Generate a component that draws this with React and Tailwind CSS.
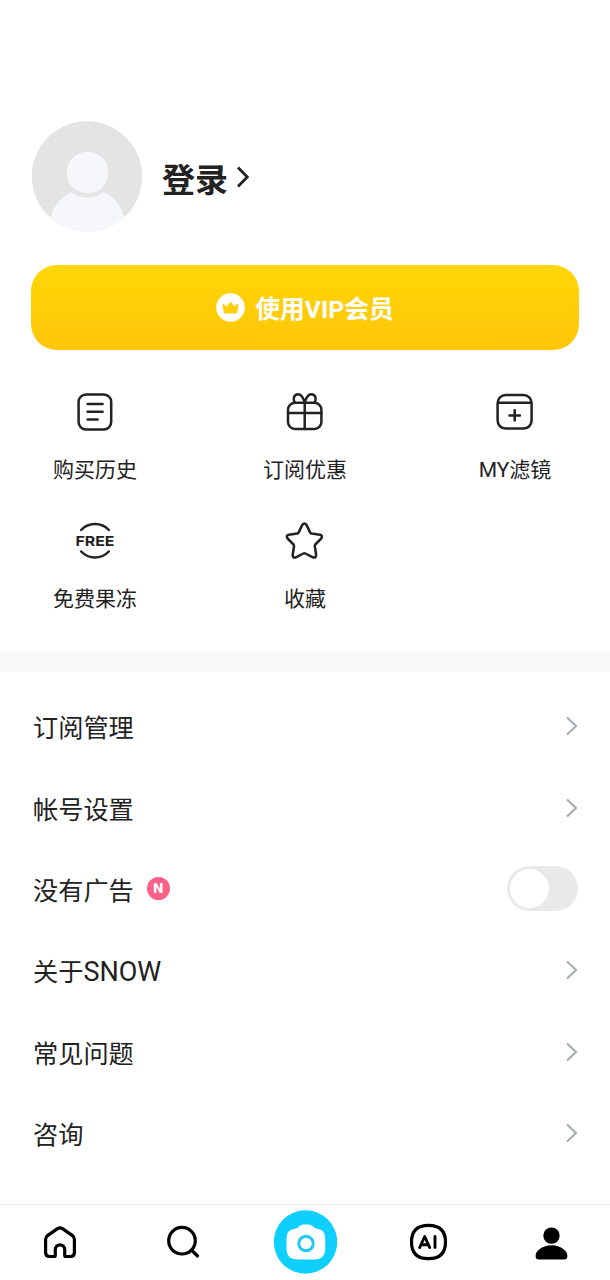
import React from 'react';

const ink = {
  fill: 'none',
  stroke: '#222',
  strokeWidth: 2.5,
  strokeLinecap: 'round',
  strokeLinejoin: 'round',
};

const HistoryIcon = () => (
  <svg width="44" height="44" viewBox="0 0 44 44" {...ink}>
    <rect x="5.600" y="4.500" width="32.600" height="35" rx="7.500" />
    <path d="M14.600 14h15M14.600 21.800h15M14.600 29.600h10" />
  </svg>
);

const GiftIcon = () => (
  <svg width="44" height="44" viewBox="0 0 44 44" {...ink}>
    <rect x="5" y="12.800" width="33.400" height="26.200" rx="7" />
    <path d="M5 23h33.400M21.700 12.800V39M21.700 12.800C20.500 8 18.500 4.200 15 4.200c-4 0-5.600 4.600-3 8.600M21.700 12.800C22.900 8 24.900 4.200 28.400 4.200c4 0 5.600 4.600 3 8.600" />
  </svg>
);

const FilterIcon = () => (
  <svg width="44" height="44" viewBox="0 0 44 44" {...ink}>
    <rect x="4.600" y="5" width="34" height="33.600" rx="8" />
    <path d="M5.200 12.700h32.800M21.700 20.200v10.400M16.500 25.400h10.400" />
  </svg>
);

const FreeIcon = () => (
  <svg width="44" height="44" viewBox="0 0 44 44" {...ink}>
    <path d="M8.200 11A19 19 0 0 1 35.800 11M8.200 32.500A19 19 0 0 0 35.800 32.500" />
    <text x="22" y="26.900" textAnchor="middle" textLength="39" lengthAdjust="spacingAndGlyphs" fill="#222" stroke="none" fontFamily="Inter, sans-serif" fontWeight="700" fontSize="13.800">FREE</text>
  </svg>
);

const StarIcon = () => (
  <svg width="44" height="44" viewBox="0 0 44 44" {...ink}>
    <path d="M19.300 5.900Q21.400 3 23.500 5.900L27.100 13.400Q27.600 14.300 28.600 14.500L36.900 15.800Q40.300 16.600 38.200 19.500L32.300 25.500Q31.600 26.300 31.800 27.300L33.100 35.800Q33.200 39.400 29.900 38.300L22.400 34.500Q21.400 34 20.400 34.500L12.900 38.300Q9.600 39.400 9.700 35.800L11 27.300Q11.200 26.300 10.500 25.500L4.600 19.500Q2.500 16.600 5.900 15.800L14.200 14.500Q15.200 14.300 15.700 13.400Z" />
  </svg>
);

const Chevron = () => (
  <svg width="14" height="22" viewBox="0 0 14 22" fill="none" stroke="#a9adb1" strokeWidth="2.200">
    <path d="M2 2.500l9 8.500-9 8.500" />
  </svg>
);

const shortcuts = [
  ['购买历史', HistoryIcon],
  ['订阅优惠', GiftIcon],
  ['MY滤镜', FilterIcon],
  ['免费果冻', FreeIcon],
  ['收藏', StarIcon],
];

const rows = ['订阅管理', '帐号设置', '没有广告', '关于SNOW', '常见问题', '咨询'];

function Row({ label }) {
  const toggle = label === '没有广告';
  return (
    <li className="flex h-[81.4px] items-center justify-between pl-[33px] pr-[31px]">
      <span className="flex items-center text-[25.2px] leading-9 text-[#222]">
        <span className="translate-y-[3px]">
          {label.replace('SNOW', '')}
          {label.includes('SNOW') && <span className="text-[27px] leading-none">SNOW</span>}
        </span>
        {toggle && (
          <span className="ml-[13px] flex h-[23px] w-[23px] items-center justify-center rounded-full bg-[#fb6187] font-[Inter,sans-serif] text-[13px] font-extrabold leading-none text-white">N</span>
        )}
      </span>
      {toggle ? (
        <button className="mr-px flex h-[45px] w-[71px] items-center rounded-full bg-[#e9e9e9] pl-[3px]">
          <span className="h-[39px] w-[39px] rounded-full bg-white" />
        </button>
      ) : (
        <Chevron />
      )}
    </li>
  );
}

export default function App() {
  return (
    <div className="flex h-[1280px] w-[610px] flex-col overflow-hidden bg-white font-[Roboto,'Noto_Sans_CJK_SC',sans-serif] text-[#222]">
      <header className="flex items-center pl-[31px] pt-[121px]">
        <svg width="112" height="111" viewBox="0 0 112 112">
          <clipPath id="avatar"><circle cx="56" cy="56" r="55.700" /></clipPath>
          <g clipPath="url(#avatar)">
            <rect width="112" height="112" fill="#e4e4e4" />
            <path d="M19.500 112v-12c0-10 8-22 20-28q17 10 34 0c12 6 20 18 20 28v12z" fill="#f5f7fa" />
            <circle cx="56.500" cy="52" r="21" fill="#f5f7fa" />
          </g>
        </svg>
        <h1 className="ml-[19px] mt-[9px] text-[33px] font-bold leading-[48px]">登录</h1>
        <svg className="ml-[8px] mt-px" width="16" height="26" viewBox="0 0 16 26" fill="none" stroke="#222" strokeWidth="2.800">
          <path d="M2 3.500l9.300 9.500L2 22.500" />
        </svg>
      </header>

      <button className="mx-[31px] mt-[32.500px] flex h-[85.500px] shrink-0 items-center justify-center rounded-[26px] bg-gradient-to-b from-[#ffd708] to-[#ffc507] text-white">
        <svg width="29" height="29" viewBox="0 0 29 29">
          <circle cx="14.500" cy="14.500" r="14.300" fill="#fff" />
          <path d="M7 11.200l4 2.800 3.500-5 3.500 5 4-2.800-1.400 8.800H8.400z" fill="#ffce06" stroke="#ffce06" strokeWidth="1" strokeLinejoin="round" />
        </svg>
        <span className="ml-[10px] translate-y-[3px] text-[24.800px] font-bold leading-9">使用VIP会员</span>
      </button>

      <section className="mt-[40px] grid grid-cols-[110px_110px_110px] justify-between gap-y-[28px] px-10">
        {shortcuts.map(([label, Icon]) => (
          <div key={label} className="flex h-[101px] flex-col items-center">
            <Icon />
            <span className="mt-[21px] text-[21px] leading-[30px]">{label}</span>
          </div>
        ))}
      </section>

      <div className="mt-[33px] h-[19px] shrink-0 bg-[#f7f8f8]" />

      <ul className="mt-[13.500px] shrink-0">
        {rows.map((label) => <Row key={label} label={label} />)}
      </ul>

      <nav className="mt-auto flex h-[76px] shrink-0 items-center justify-between border-t border-[#efefef] px-7 pb-px">
        <svg width="64" height="64" viewBox="0 0 64 64" fill="none" stroke="#000" strokeWidth="3.200" strokeLinejoin="round">
          <path d="M29.500 18.600Q32 17 34.500 18.600L44.500 25.600Q46.400 27 46.400 29.500V42.500Q46.400 46.500 42.400 46.500H38Q36.700 46.500 36.700 45.200V39.500a4.700 4.700 0 0 0-9.400 0V45.200Q27.300 46.500 26 46.500H21.600Q17.600 46.500 17.600 42.500V29.500Q17.600 27 19.500 25.600Z" />
        </svg>
        <svg width="64" height="64" viewBox="0 0 64 64" fill="none" stroke="#000" strokeWidth="3.200" strokeLinecap="round">
          <circle cx="31" cy="30.700" r="13.300" />
          <path d="M40.500 40.200l6 5.800" />
        </svg>
        <svg width="64" height="64" viewBox="0 0 64 64">
          <circle cx="32.500" cy="32" r="31.700" fill="#0fcfff" />
          <path d="M26.500 16Q28 14.500 30.500 14.500h5Q38 14.500 39.500 16l2 1.800q1 .8 2.700 1 8 .9 8 9.500V38.500q0 11-11 11h-16.500q-11.200 0-11.200-11V28.300q0-8.600 8.300-9.500 1.700-.2 2.700-1z" fill="#fff" />
          <circle cx="33" cy="33.500" r="7.200" fill="#fff" stroke="#20c8f5" strokeWidth="3" />
        </svg>
        <svg width="64" height="64" viewBox="0 0 64 64">
          <path d="M32.500 15.300C44 15.300 49.500 20.500 49.500 32S44 48.700 32.500 48.700 15.500 43.500 15.500 32 21 15.300 32.500 15.300Z" fill="none" stroke="#000" strokeWidth="3.200" />
          <path d="M23.700 37.500L28.700 26.500L33.700 37.500M25.500 34.700h6.400M39 26.500v11" fill="none" stroke="#000" strokeWidth="2.900" strokeLinecap="round" strokeLinejoin="round" />
        </svg>
        <svg width="64" height="64" viewBox="0 0 64 64">
          <circle cx="33.500" cy="25.600" r="8.200" />
          <path d="M17.600 46q0-4 4.200-7 5-3.700 11.700-3.700T45.200 39q4.200 3 4.200 7 0 3.500-3.300 3.500H20.900q-3.300 0-3.300-3.500z" />
        </svg>
      </nav>
    </div>
  );
}
